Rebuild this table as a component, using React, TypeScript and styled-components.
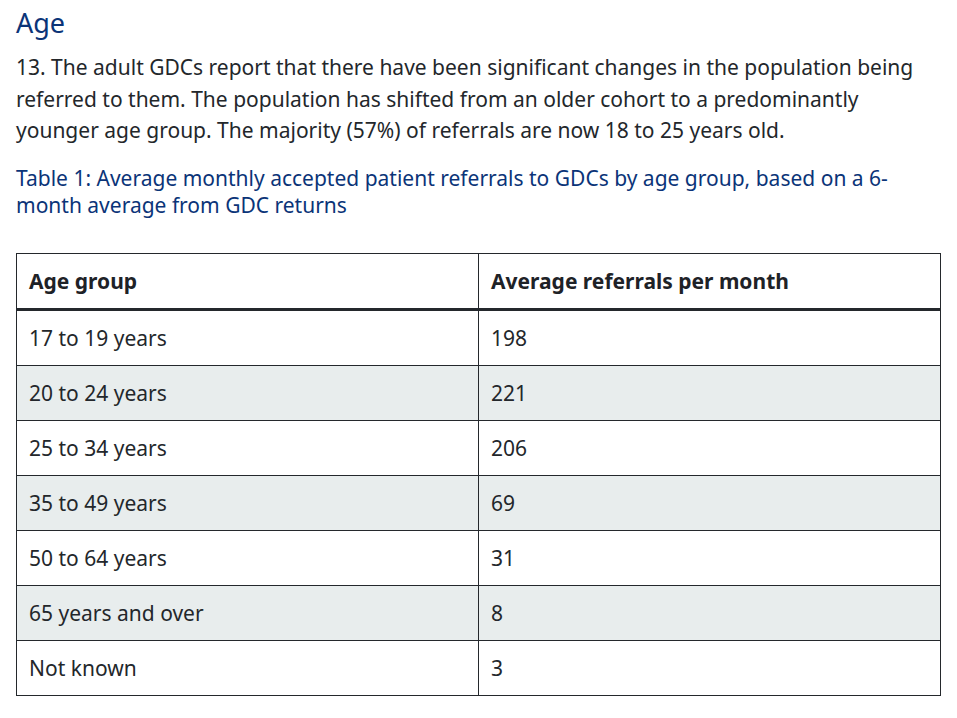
import React from "react";
import styled, { createGlobalStyle } from "styled-components";

const GlobalStyle = createGlobalStyle`
  body {
    margin: 0;
    background: #ffffff;
    font-family: "Noto Sans", "Open Sans", sans-serif;
    color: #1e2227;
  }
`;

const Wrapper = styled.div`
  padding: 0 17px 0 16px;
  width: 924px;
`;

const Heading = styled.h2`
  margin: 4px 0 0;
  font-size: 27px;
  font-weight: 400;
  line-height: 38px;
  color: #0b3478;
`;

const Paragraph = styled.p`
  margin: 10px 0 0;
  font-size: 21px;
  line-height: 31.5px;
  color: #23272b;
`;

const Caption = styled.p`
  margin: 18px 0 0;
  font-size: 21px;
  line-height: 27px;
  color: #0b3478;
`;

const Table = styled.table`
  margin-top: 34px;
  width: 925px;
  border-collapse: collapse;
  font-size: 21px;
`;

const HeadCell = styled.th`
  height: 54px;
  padding: 0 12px;
  text-align: left;
  font-weight: 700;
  border: 1.5px solid #24282c;
  border-bottom: 3px solid #24282c;
  width: 50%;
`;

const Row = styled.tr<{ $striped: boolean }>`
  background: ${(p) => (p.$striped ? "#e8eded" : "#ffffff")};
`;

const Cell = styled.td`
  height: 54px;
  padding: 0 12px;
  border: 1.5px solid #24282c;
  color: #23272b;
`;

const rows: [string, string][] = [
  ["17 to 19 years", "198"],
  ["20 to 24 years", "221"],
  ["25 to 34 years", "206"],
  ["35 to 49 years", "69"],
  ["50 to 64 years", "31"],
  ["65 years and over", "8"],
  ["Not known", "3"],
];

const App: React.FC = () => {
  return (
    <Wrapper>
      <GlobalStyle />
      <Heading>Age</Heading>
      <Paragraph>
        13. The adult GDCs report that there have been significant changes in
        the population being referred to them. The population has shifted
        from an older cohort to a predominantly younger age group. The
        majority (57%) of referrals are now 18 to 25 years old.
      </Paragraph>
      <Caption>
        Table 1: Average monthly accepted patient referrals to GDCs by age
        group, based on a 6-month average from GDC returns
      </Caption>
      <Table>
        <thead>
          <tr>
            <HeadCell>Age group</HeadCell>
            <HeadCell>Average referrals per month</HeadCell>
          </tr>
        </thead>
        <tbody>
          {rows.map(([group, count], i) => (
            <Row key={group} $striped={i % 2 === 1}>
              <Cell>{group}</Cell>
              <Cell>{count}</Cell>
            </Row>
          ))}
        </tbody>
      </Table>
    </Wrapper>
  );
};

export default App;
